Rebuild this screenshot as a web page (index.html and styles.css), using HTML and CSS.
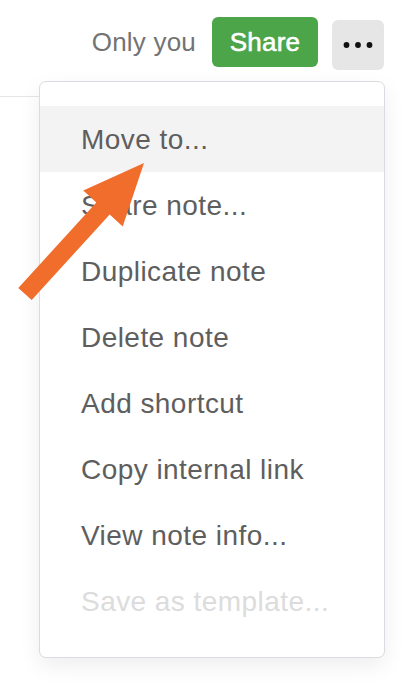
FILE: index.html
```html
<!DOCTYPE html>
<html lang="en">
<head>
<meta charset="utf-8">
<title>Note menu</title>
<link rel="stylesheet" href="styles.css">
</head>
<body>
<header class="topbar">
  <span class="visibility">Only you</span>
  <button class="share-btn">Share</button>
  <button class="more-btn" aria-label="More">
    <svg width="30" height="8" viewBox="0 0 30 8"><circle cx="3.5" cy="4" r="2.9"/><circle cx="15" cy="4" r="2.9"/><circle cx="26.5" cy="4" r="2.9"/></svg>
  </button>
</header>
<div class="rule"></div>

<ul class="menu">
  <li class="item active">Move to...</li>
  <li class="item">Share note...</li>
  <li class="item">Duplicate note</li>
  <li class="item">Delete note</li>
  <li class="item">Add shortcut</li>
  <li class="item">Copy internal link</li>
  <li class="item">View note info...</li>
  <li class="item disabled">Save as template...</li>
</ul>

<svg class="arrow" width="160" height="320" viewBox="0 0 160 320">
  <polygon points="144,163 83.3,190.6 96.3,202.5 18.3,288 31.7,300 109.7,214.5 122.7,226.4"/>
</svg>
</body>
</html>
```

FILE: styles.css
```css
html, body {
  margin: 0;
  padding: 0;
  background: #ffffff;
}
body {
  width: 414px;
  height: 696px;
  overflow: hidden;
  position: relative;
  font-family: "Liberation Sans", Arial, sans-serif;
}
.topbar {
  height: 96px;
  box-sizing: border-box;
  padding: 17px 30px 0 0;
  display: flex;
  justify-content: flex-end;
  align-items: flex-start;
}
.visibility {
  font-size: 26px;
  color: #737373;
  line-height: 50px;
  letter-spacing: 0.2px;
}
.share-btn {
  margin-left: 16px;
  width: 106px;
  height: 50px;
  border: none;
  border-radius: 6px;
  background: #4ca549;
  color: #ffffff;
  font-family: "Liberation Sans", Arial, sans-serif;
  font-size: 26px;
  font-weight: 400;
  -webkit-text-stroke: 0.6px #ffffff;
  padding: 0;
  letter-spacing: 0.2px;
}
.more-btn {
  margin-left: 14px;
  margin-top: 3px;
  width: 52px;
  height: 50px;
  border: none;
  border-radius: 6px;
  background: #e6e6e6;
  padding: 0;
  display: flex;
  align-items: center;
  justify-content: center;
}
.more-btn svg {
  fill: #111111;
}
.rule {
  width: 60px;
  border-top: 1px solid #e6e6e6;
}
.menu {
  position: absolute;
  left: 39px;
  top: 81px;
  width: 346px;
  box-sizing: border-box;
  margin: 0;
  padding: 24px 0 23px;
  list-style: none;
  background: #ffffff;
  border: 1px solid #d9dce0;
  border-radius: 7px;
  box-shadow: 0 8px 22px rgba(0, 0, 0, 0.07);
}
.item {
  height: 66px;
  box-sizing: border-box;
  padding: 1px 0 0 41px;
  line-height: 65px;
  font-size: 28px;
  letter-spacing: 0.45px;
  color: #5e5e5e;
  white-space: nowrap;
}
.item.active {
  background: #f3f3f3;
}
.item.disabled {
  color: #dcdcdc;
}
.arrow {
  position: absolute;
  left: 0;
  top: 0;
  fill: #f06d2b;
}
```
